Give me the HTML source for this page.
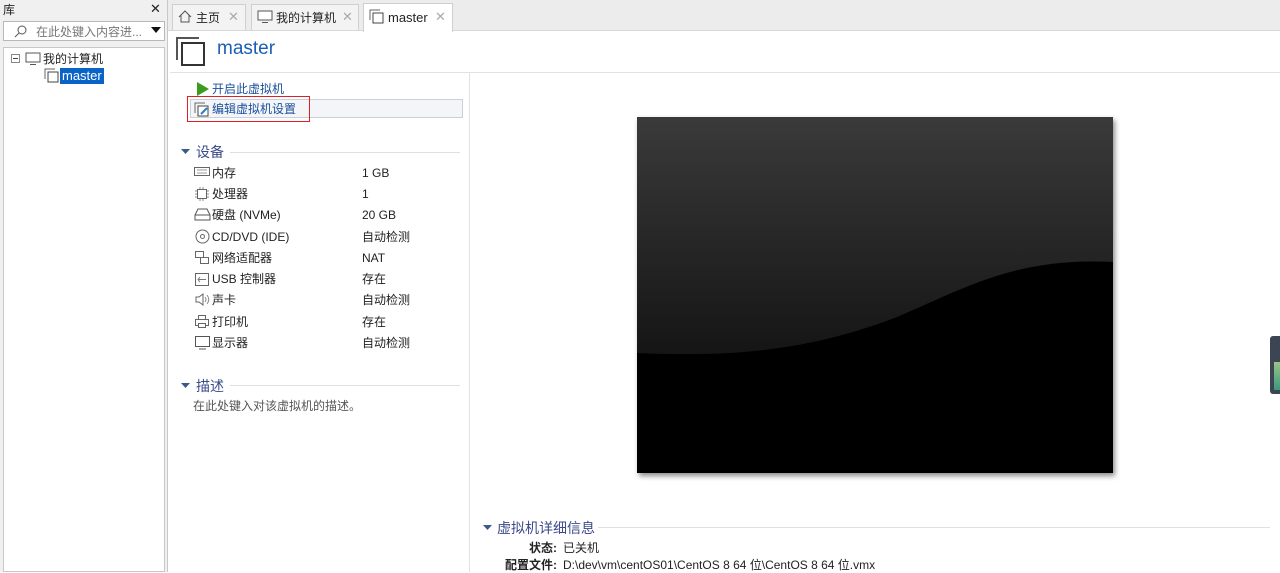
<!DOCTYPE html>
<html><head><meta charset="utf-8"><style>
*{margin:0;padding:0;box-sizing:border-box}
body{width:1280px;height:572px;overflow:hidden;background:#fff;font-family:"Liberation Sans","Noto Sans CJK SC",sans-serif;font-size:12px;color:#222;position:relative}
.a{position:absolute;white-space:nowrap}
.row{position:absolute;left:212px}
.val{position:absolute;left:362px}
.l{margin-top:2px}
</style></head><body>
<!-- left library -->
<div class="a" style="left:0;top:0;width:168px;height:572px;background:#f0f0f0;border-right:1px solid #c8c8c8"></div>
<div class="a" style="left:3px;top:1px;font-size:12px">库</div>
<div class="a" style="left:150px;top:1px;font-size:13px">✕</div>
<div class="a" style="left:3px;top:21px;width:162px;height:20px;background:#fff;border:1px solid #b8b8b8"></div>
<svg class="a" style="left:14px;top:24px" width="14" height="14"><circle cx="8" cy="6" r="4" fill="none" stroke="#555"/><line x1="5" y1="9" x2="1" y2="13" stroke="#555"/></svg>
<div class="a" style="left:36px;top:23px;color:#777">在此处键入内容进...</div>
<svg class="a" style="left:151px;top:27px" width="10" height="7"><path d="M0 0H10L5 6Z" fill="#111"/></svg>
<div class="a" style="left:3px;top:47px;width:162px;height:525px;background:#fff;border:1px solid #c8c8c8"></div>
<svg class="a" style="left:11px;top:54px" width="10" height="10"><rect x=".5" y=".5" width="8" height="8" fill="#fff" stroke="#888"/><line x1="2" y1="4.5" x2="7" y2="4.5" stroke="#444"/></svg>
<svg class="a" style="left:25px;top:52px" width="16" height="14"><rect x="1" y="1" width="14" height="9" fill="#fff" stroke="#555"/><line x1="5" y1="12.5" x2="11" y2="12.5" stroke="#555"/></svg>
<div class="a" style="left:43px;top:50px">我的计算机</div>
<svg class="a" style="left:44px;top:68px" width="16" height="16"><path d="M1 11V1h10" fill="none" stroke="#666"/><rect x="4" y="4" width="10" height="10" fill="#fff" stroke="#444"/></svg>
<div class="a" style="left:60px;top:68px;background:#0a64c8;color:#fff;padding:0 2px;height:16px;line-height:16px;font-size:13px">master</div>
<!-- tabs -->
<div class="a" style="left:168px;top:0;width:1112px;height:31px;background:#ececec;border-bottom:1px solid #d8d8d8"></div>
<div class="a" style="left:172px;top:4px;width:74px;height:26px;background:#f3f3f3;border:1px solid #cfcfcf;border-bottom:none"></div>
<svg class="a" style="left:178px;top:10px" width="14" height="13"><path d="M1 7L7 1l6 6M3 5v7h8V5" fill="none" stroke="#555"/></svg>
<div class="a" style="left:196px;top:9px">主页</div>
<div class="a" style="left:228px;top:9px;color:#aaa;font-size:13px">✕</div>
<div class="a" style="left:251px;top:4px;width:108px;height:26px;background:#f3f3f3;border:1px solid #cfcfcf;border-bottom:none"></div>
<svg class="a" style="left:257px;top:10px" width="16" height="14"><rect x="1" y="1" width="14" height="9" fill="#fff" stroke="#555"/><line x1="5" y1="12.5" x2="11" y2="12.5" stroke="#555"/></svg>
<div class="a" style="left:276px;top:9px">我的计算机</div>
<div class="a" style="left:342px;top:9px;color:#aaa;font-size:13px">✕</div>
<div class="a" style="left:363px;top:3px;width:90px;height:29px;background:#fff;border:1px solid #cfcfcf;border-bottom:none"></div>
<svg class="a" style="left:369px;top:9px" width="16" height="16"><path d="M1 11V1h10" fill="none" stroke="#666"/><rect x="4" y="4" width="10" height="10" fill="#fff" stroke="#444"/></svg>
<div class="a" style="left:388px;top:10px;font-size:13px">master</div>
<div class="a" style="left:435px;top:9px;color:#aaa;font-size:13px">✕</div>
<!-- header -->
<svg class="a" style="left:175px;top:36px" width="32" height="30"><path d="M2 24V2h22" fill="none" stroke="#555" stroke-width="2"/><rect x="7" y="7" width="22" height="22" fill="#fff" stroke="#333" stroke-width="2"/></svg>
<div class="a" style="left:217px;top:38px;font-size:19px;color:#1a5fb4">master</div>
<div class="a" style="left:170px;top:72px;width:1110px;height:1px;background:#e2e2e2"></div>
<div class="a" style="left:469px;top:73px;width:1px;height:499px;background:#e2e2e2"></div>
<!-- actions -->
<svg class="a" style="left:196px;top:82px" width="14" height="14"><path d="M1 0L13 7L1 14Z" fill="#3a9c1e"/></svg>
<div class="a" style="left:212px;top:80px;color:#1a4f9a">开启此虚拟机</div>
<div class="a" style="left:190px;top:99px;width:273px;height:19px;background:#f3f5f9;border:1px solid #c9d0dc"></div>
<div class="a" style="left:187px;top:96px;width:123px;height:26px;border:1.5px solid #e02020"></div>
<svg class="a" style="left:194px;top:102px" width="16" height="15"><path d="M1 11V1h10" fill="none" stroke="#666"/><rect x="4" y="4" width="10" height="10" fill="#fff" stroke="#444"/><path d="M7 12l6-6" stroke="#2a7ad0" stroke-width="2"/></svg>
<div class="a" style="left:212px;top:100px;color:#1a4f9a">编辑虚拟机设置</div>
<!-- devices -->
<svg class="a" style="left:181px;top:149px" width="9" height="6"><path d="M0 0H9L4.5 5Z" fill="#3a5a8a"/></svg>
<div class="a" style="left:196px;top:142px;font-size:14px;color:#3a4a8a">设备</div>
<div class="a" style="left:230px;top:152px;width:230px;height:1px;background:#e0e0e0"></div>
<div style="color:#222">
<div class="a row" style="top:164px">内存</div><div class="a val l" style="top:164px">1 GB</div>
<div class="a row" style="top:185px">处理器</div><div class="a val l" style="top:185px">1</div>
<div class="a row" style="top:206px">硬盘 (NVMe)</div><div class="a val l" style="top:206px">20 GB</div>
<div class="a row l" style="top:228px">CD/DVD (IDE)</div><div class="a val" style="top:228px">自动检测</div>
<div class="a row" style="top:249px">网络适配器</div><div class="a val l" style="top:249px">NAT</div>
<div class="a row" style="top:270px">USB 控制器</div><div class="a val" style="top:270px">存在</div>
<div class="a row" style="top:291px">声卡</div><div class="a val" style="top:291px">自动检测</div>
<div class="a row" style="top:313px">打印机</div><div class="a val" style="top:313px">存在</div>
<div class="a row" style="top:334px">显示器</div><div class="a val" style="top:334px">自动检测</div>
</div>
<svg class="a" style="left:194px;top:166px" width="16" height="12"><rect x=".5" y="1.5" width="15" height="8" fill="none" stroke="#666"/><path d="M3 4h10M3 7h10" stroke="#999"/></svg>
<svg class="a" style="left:194px;top:186px" width="16" height="15"><rect x="3.5" y="3.5" width="9" height="9" fill="none" stroke="#666"/><path d="M1 5h2M1 8h2M1 11h2M13 5h2M13 8h2M13 11h2M6 1v2M9 1v2M6 13v2M9 13v2" stroke="#888"/></svg>
<svg class="a" style="left:194px;top:208px" width="17" height="13"><path d="M1 7L4 1h9l3 6v5H1Z" fill="none" stroke="#555"/><line x1="1" y1="7" x2="16" y2="7" stroke="#555"/></svg>
<svg class="a" style="left:195px;top:229px" width="15" height="15"><circle cx="7.5" cy="7.5" r="6.5" fill="none" stroke="#666"/><circle cx="7.5" cy="7.5" r="2" fill="none" stroke="#666"/></svg>
<svg class="a" style="left:194px;top:250px" width="16" height="16"><rect x="1.5" y="1.5" width="8" height="6" fill="none" stroke="#666"/><rect x="6.5" y="7.5" width="8" height="6" fill="none" stroke="#666"/></svg>
<svg class="a" style="left:194px;top:272px" width="16" height="15"><rect x="1.5" y="1.5" width="13" height="12" fill="none" stroke="#666"/><path d="M4 7.5h8M6 5l-2 2.5L6 10" fill="none" stroke="#777"/></svg>
<svg class="a" style="left:195px;top:293px" width="15" height="13"><path d="M1 4h3l4-3v11L4 9H1Z" fill="none" stroke="#666"/><path d="M10 4q2 2.5 0 5M12 2q3.5 4.5 0 9" fill="none" stroke="#888"/></svg>
<svg class="a" style="left:194px;top:314px" width="16" height="15"><rect x="4.5" y="1.5" width="7" height="4" fill="none" stroke="#666"/><rect x="1.5" y="5.5" width="13" height="6" fill="none" stroke="#666"/><rect x="4.5" y="9.5" width="7" height="4" fill="#fff" stroke="#666"/></svg>
<svg class="a" style="left:194px;top:335px" width="17" height="15"><rect x="1.5" y="1.5" width="14" height="10" fill="none" stroke="#555"/><line x1="5" y1="14" x2="12" y2="14" stroke="#555"/></svg>
<!-- description -->
<svg class="a" style="left:181px;top:383px" width="9" height="6"><path d="M0 0H9L4.5 5Z" fill="#3a5a8a"/></svg>
<div class="a" style="left:196px;top:376px;font-size:14px;color:#3a4a8a">描述</div>
<div class="a" style="left:230px;top:385px;width:230px;height:1px;background:#e0e0e0"></div>
<div class="a" style="left:193px;top:397px;color:#555">在此处键入对该虚拟机的描述。</div>
<!-- screen -->
<div class="a" style="left:637px;top:117px;width:476px;height:356px;background:#000;box-shadow:2px 3px 5px rgba(0,0,0,.45);overflow:hidden">
<svg width="476" height="356" style="display:block"><defs><linearGradient id="g" x1="0" y1="0" x2="0" y2="1"><stop offset="0" stop-color="#3a3a3a"/><stop offset="1" stop-color="#151515"/></linearGradient></defs><path d="M0 0H476V145C380 140 330 170 260 200C170 235 90 240 0 236Z" fill="url(#g)"/></svg>
</div>
<!-- details -->
<svg class="a" style="left:483px;top:525px" width="9" height="6"><path d="M0 0H9L4.5 5Z" fill="#3a5a8a"/></svg>
<div class="a" style="left:497px;top:518px;font-size:14px;color:#3a4a8a">虚拟机详细信息</div>
<div class="a" style="left:598px;top:527px;width:672px;height:1px;background:#e0e0e0"></div>
<div class="a" style="left:529px;top:539px;font-weight:bold">状态:</div>
<div class="a" style="left:563px;top:539px">已关机</div>
<div class="a" style="left:505px;top:556px;font-weight:bold">配置文件:</div>
<div class="a" style="left:563px;top:556px">D:\dev\vm\centOS01\CentOS 8 64 位\CentOS 8 64 位.vmx</div>
<!-- right widget -->
<div class="a" style="left:1270px;top:336px;width:12px;height:58px;background:#3c4552;border-radius:3px 0 0 3px"></div>
<div class="a" style="left:1274px;top:362px;width:6px;height:28px;background:linear-gradient(#9ac48a,#3a9a7a)"></div>
</body></html>
